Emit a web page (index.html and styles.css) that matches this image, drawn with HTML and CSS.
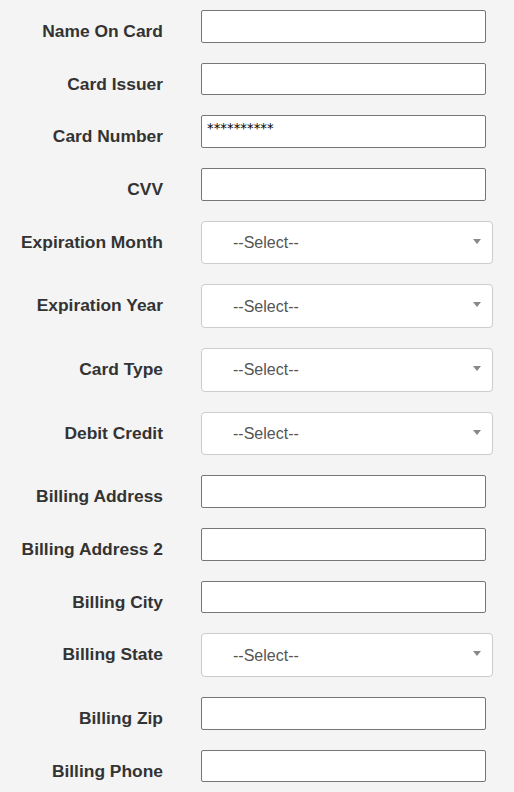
FILE: index.html
```html
<!DOCTYPE html>
<html lang="en">
<head>
<meta charset="utf-8">
<title>Card details</title>
<link rel="stylesheet" href="styles.css">
</head>
<body>
<form class="form">
  <div class="row">
    <label class="label">Name On Card</label>
    <input class="text" type="text">
  </div>
  <div class="row">
    <label class="label">Card Issuer</label>
    <input class="text" type="text">
  </div>
  <div class="row">
    <label class="label">Card Number</label>
    <input class="text" type="text" value="**********">
  </div>
  <div class="row">
    <label class="label">CVV</label>
    <input class="text" type="text">
  </div>
  <div class="row">
    <label class="label">Expiration Month</label>
    <div class="select-wrap"><select class="select"><option>--Select--</option></select><span class="caret"></span></div>
  </div>
  <div class="row">
    <label class="label">Expiration Year</label>
    <div class="select-wrap"><select class="select"><option>--Select--</option></select><span class="caret"></span></div>
  </div>
  <div class="row">
    <label class="label">Card Type</label>
    <div class="select-wrap"><select class="select"><option>--Select--</option></select><span class="caret"></span></div>
  </div>
  <div class="row">
    <label class="label">Debit Credit</label>
    <div class="select-wrap"><select class="select"><option>--Select--</option></select><span class="caret"></span></div>
  </div>
  <div class="row">
    <label class="label">Billing Address</label>
    <input class="text" type="text">
  </div>
  <div class="row">
    <label class="label">Billing Address 2</label>
    <input class="text" type="text">
  </div>
  <div class="row">
    <label class="label">Billing City</label>
    <input class="text" type="text">
  </div>
  <div class="row">
    <label class="label">Billing State</label>
    <div class="select-wrap"><select class="select"><option>--Select--</option></select><span class="caret"></span></div>
  </div>
  <div class="row">
    <label class="label">Billing Zip</label>
    <input class="text" type="text">
  </div>
  <div class="row">
    <label class="label">Billing Phone</label>
    <input class="text" type="text">
  </div>
</form>
</body>
</html>
```

FILE: styles.css
```css
html, body {
  margin: 0;
  padding: 0;
  background: #f4f4f4;
  overflow: hidden;
}
body {
  font-family: "Liberation Sans", Arial, sans-serif;
  color: #333;
}
.form {
  display: flex;
  flex-direction: column;
  gap: 20px;
  padding-top: 10px;
}
.row {
  display: flex;
  align-items: flex-start;
  gap: 38px;
}
.label {
  width: 163px;
  flex: none;
  text-align: right;
  font-weight: bold;
  font-size: 17.4px;
  line-height: 20px;
  padding-top: 11px;
  color: #333;
}
.text {
  box-sizing: border-box;
  width: 285px;
  height: 32.67px;
  margin: 0;
  border: 1px solid #767676;
  border-radius: 2px;
  background: #fff;
  font-family: "DejaVu Sans", sans-serif;
  font-size: 13.33px;
  line-height: 15px;
  padding: 5px 5px 10.67px 5px;
  color: #000;
  outline: none;
}
.select-wrap {
  position: relative;
  width: 292px;
  height: 43.67px;
}
.select {
  -webkit-appearance: none;
  appearance: none;
  box-sizing: border-box;
  width: 100%;
  height: 100%;
  margin: 0;
  border: 1px solid #ccc;
  border-radius: 4px;
  background: #fff;
  font-family: "Liberation Sans", Arial, sans-serif;
  font-size: 16px;
  color: #555;
  padding: 0 30px 0 31px;
  outline: none;
}
.caret {
  position: absolute;
  right: 12px;
  top: 18px;
  width: 0;
  height: 0;
  border-left: 4.5px solid transparent;
  border-right: 4.5px solid transparent;
  border-top: 5.5px solid #888;
  pointer-events: none;
}
```
